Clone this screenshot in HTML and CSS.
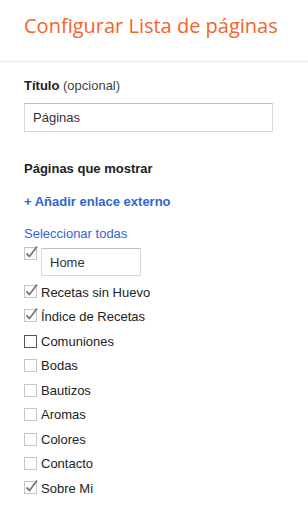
FILE: index.html
```html
<!DOCTYPE html>
<html>
<head>
<meta charset="utf-8">
<link rel="stylesheet" href="styles.css">
</head>
<body>
<div class="header">
	<h1>Configurar Lista de páginas</h1>
</div>
<div class="content">
	<div class="field">
		<label class="label"><b>Título</b> (opcional)</label>
		<div class="textbox">Páginas</div>
	</div>

	<h2>Páginas que mostrar</h2>
	<a class="add-link">+ Añadir enlace externo</a>
	<a class="select-all">Seleccionar todas</a>

	<ul class="pages">
		<li class="page home">
			<span class="check on"><svg width="15" height="16" viewBox="0 0 15 16"><rect x="0.5" y="2.5" width="12" height="12" fill="#fff" stroke="#c6c6c6"/><path d="M2.5 8.5 L5.5 11.5 L13 1.5" fill="none" stroke="#777" stroke-width="1.8"/></svg></span>
			<div class="textbox small">Home</div>
		</li>
		<li class="page"><span class="check on"><svg width="15" height="16" viewBox="0 0 15 16"><rect x="0.5" y="2.5" width="12" height="12" fill="#fff" stroke="#c6c6c6"/><path d="M2.5 8.5 L5.5 11.5 L13 1.5" fill="none" stroke="#777" stroke-width="1.8"/></svg></span>Recetas sin Huevo</li>
		<li class="page"><span class="check on"><svg width="15" height="16" viewBox="0 0 15 16"><rect x="0.5" y="2.5" width="12" height="12" fill="#fff" stroke="#c6c6c6"/><path d="M2.5 8.5 L5.5 11.5 L13 1.5" fill="none" stroke="#777" stroke-width="1.8"/></svg></span>Índice de Recetas</li>
		<li class="page"><span class="check dark"></span>Comuniones</li>
		<li class="page"><span class="check"></span>Bodas</li>
		<li class="page"><span class="check"></span>Bautizos</li>
		<li class="page"><span class="check"></span>Aromas</li>
		<li class="page"><span class="check"></span>Colores</li>
		<li class="page"><span class="check"></span>Contacto</li>
		<li class="page"><span class="check on"><svg width="15" height="16" viewBox="0 0 15 16"><rect x="0.5" y="2.5" width="12" height="12" fill="#fff" stroke="#c6c6c6"/><path d="M2.5 8.5 L5.5 11.5 L13 1.5" fill="none" stroke="#777" stroke-width="1.8"/></svg></span>Sobre Mi</li>
	</ul>
</div>
</body>
</html>
```
FILE: styles.css
```css
body {
  margin: 0;
  background: #fff;
  font-family: "Liberation Sans", Arial, sans-serif;
  font-size: 13px;
  color: #222;
}

.header {
  padding: 12px 24px 0 24px;
  border-bottom: 1px solid #ebebeb;
  box-sizing: border-box;
  height: 62px;
}

h1 {
  margin: 0;
  font-family: "Open Sans", sans-serif;
  font-weight: normal;
  font-size: 20px;
  color: #f4632a;
}

.content {
  padding: 16px 24px 0 24px;
}

.label {
  display: block;
  color: #444;
  line-height: 16px;
}

.label b {
  color: #222;
}

.textbox {
  margin-top: 9px;
  width: 249px;
  height: 29px;
  box-sizing: border-box;
  border: 1px solid #d9d9d9;
  border-top-color: #c0c0c0;
  padding: 0 8px;
  line-height: 27px;
  color: #333;
}

h2 {
  margin: 29px 0 0 0;
  font-size: 13px;
  font-weight: bold;
  line-height: 16px;
}

.add-link {
  display: block;
  margin-top: 17px;
  font-weight: bold;
  color: #3366cc;
  line-height: 16px;
}

.select-all {
  display: block;
  margin-top: 16px;
  color: #3a62d0;
  line-height: 16px;
}

.pages {
  list-style: none;
  margin: 6px 0 0 0;
  padding: 0;
}

.page {
  display: flex;
  align-items: center;
  height: 24.5px;
  color: #222;
}

.page.home {
  align-items: flex-start;
  height: 32px;
}

.check {
  width: 13px;
  height: 13px;
  box-sizing: border-box;
  border: 1px solid #c6c6c6;
  margin-right: 4px;
  position: relative;
  flex: none;
}

.check.dark {
  border-color: #555;
}

.check.on {
  border: none;
}

.check svg {
  position: absolute;
  left: 0;
  top: -3px;
}

.textbox.small {
  margin-top: 0;
  width: 100px;
  height: 28px;
}
```
